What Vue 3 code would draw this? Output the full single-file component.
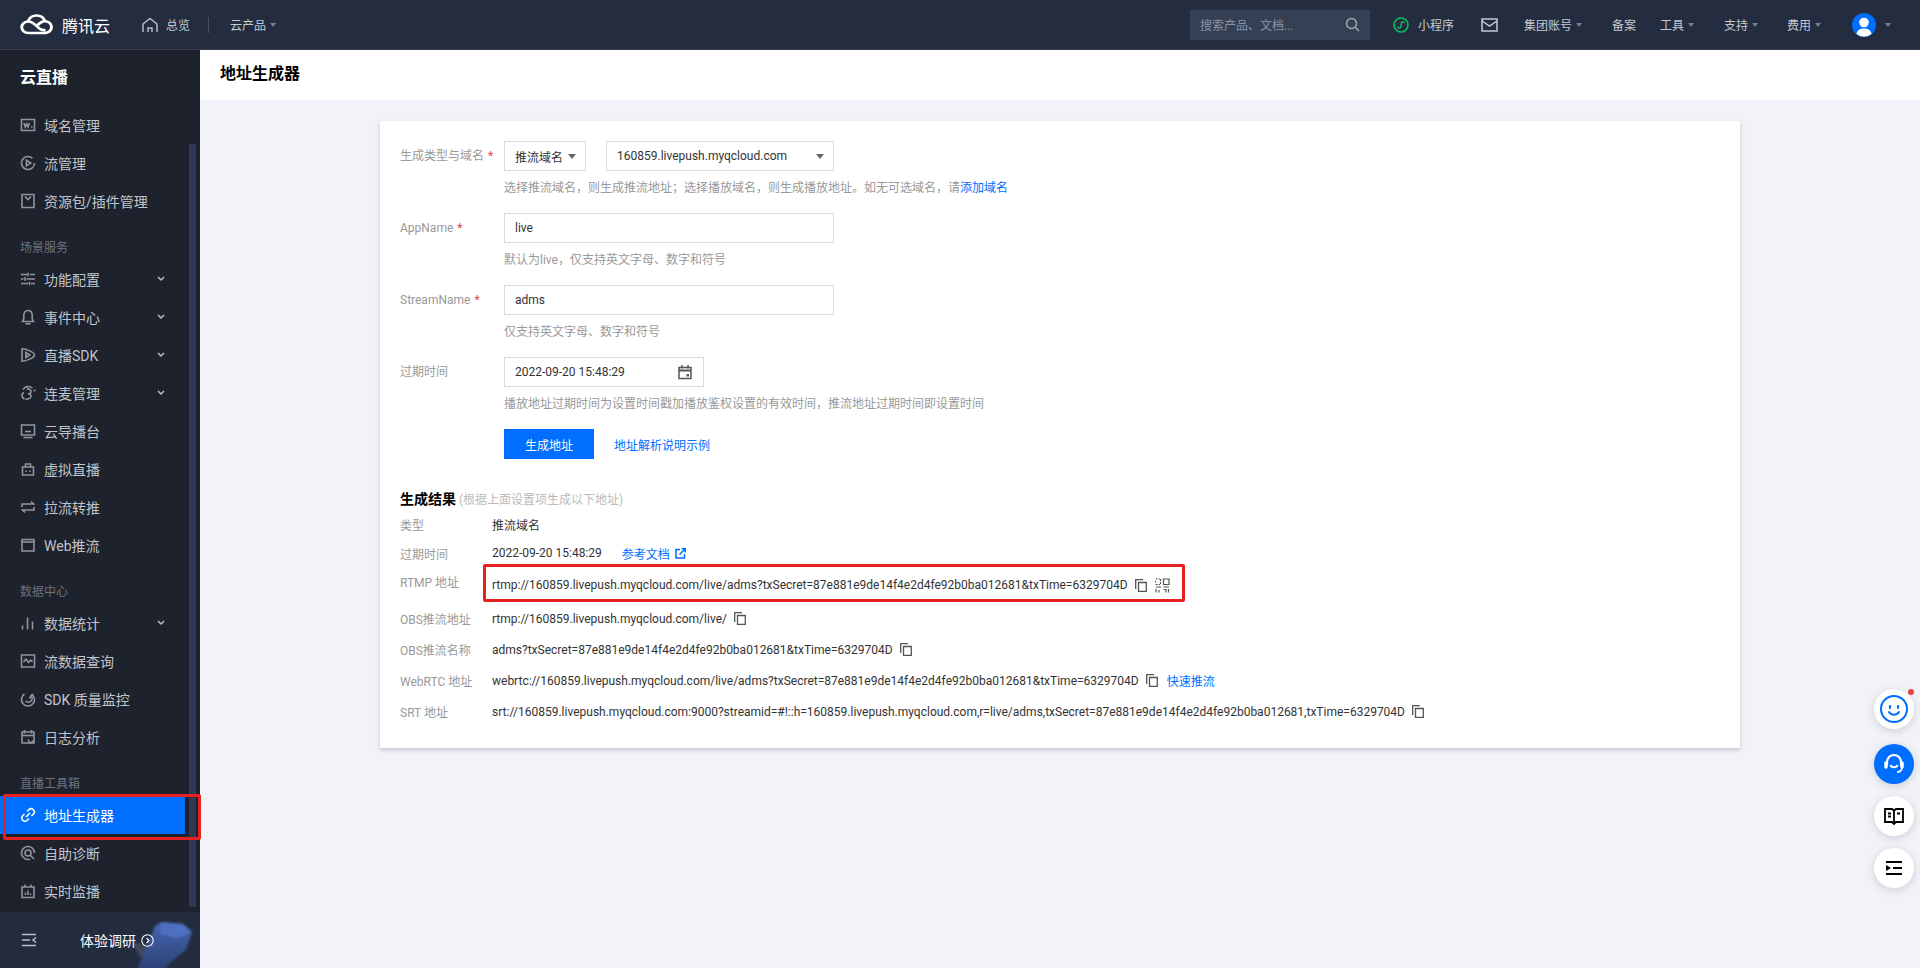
<script setup>
const navIcons = {
  domain: ['M1.500 2.500h13v11h-13z', 'M4 6l1.300 4 1.400-3 1.400 3 1.300-4', 'M11 10h1.500'],
  stream: ['M14.500 8A6.500 6.500 0 1 1 12.400 3.200', 'M6.400 5.200v5.600L10.800 8z'],
  pack: ['M2 1.500h12v13H2z', 'M5 3.500l3 3 3-3'],
  sliders: ['M1 3.500h6M10 3.500h5M8 1.800v3.400', 'M1 8h2.500M6.500 8H15M5 6.300v3.400', 'M1 12.500h7M11 12.500h4M9.500 10.800v3.400'],
  bell: ['M8 1.500C5.200 1.500 3.800 3.800 3.800 6.500v3.500L2.500 12.500h11L12.200 10V6.500c0-2.700-1.400-5-4.200-5z', 'M5.500 14.800h5'],
  sdk: ['M2 1.800c4 0 12.500 3.500 12.500 6.200S6 14.200 2 14.200z', 'M5.800 5.500v5l4-2.500z'],
  mic: ['M3 4.500A6.500 6.500 0 0 1 12.500 3', 'M7 4c2.500-.5 4.500 1 4 3s-3 1.800-3 1.800 3 .2 3 2.400-3 3.300-5.500 2.800', 'M4 7.500A3 3 0 0 0 2 10c0 2 1 3.500 2.500 4', 'M13.500 5.500h2'],
  director: ['M1.500 2h13v10h-13z', 'M5 8.500h6', 'M3.500 14.500h9'],
  robot: ['M2.500 6h11v8h-11z', 'M5.500 6V3h5v3', 'M6 9.500v1.500M10 9.500v1.500'],
  pull: ['M2 8V5h11.500L11 2.500', 'M14 8v3H2.500L5 13.500'],
  web: ['M2 2.500h12v11.500H2z', 'M2 5h12'],
  bars: ['M2.500 14.500v-4', 'M7.500 14.500V2.500', 'M12.500 14.500v-8'],
  query: ['M1.500 2h13v12h-13z', 'M3.500 9l2.500-3 2.500 3.500 2-2.500 2 1.500'],
  gauge: ['M4.500 3A6.500 6.500 0 1 0 11.500 3', 'M11 4.500A3.800 3.800 0 0 1 5.500 10', 'M9.500 7.500l2-3.500'],
  log: ['M2 3h12v11H2z', 'M4.500 1v3.500M11.500 1v3.500', 'M2 6.500h12', 'M9 10.500a2 2 0 1 0 3.500 1'],
  link: ['M6 10l4-4', 'M7 4.500L8.800 2.700a3.100 3.100 0 0 1 4.500 4.500L11.500 9', 'M9 11.500L7.200 13.300a3.100 3.100 0 0 1-4.500-4.500L4.500 7'],
  diag: ['M14.500 8A6.500 6.500 0 1 0 10 14.200', 'M5 8a3 3 0 1 1 6 0 3 3 0 0 1-6 0', 'M10.500 10.500l3.500 3.500'],
  monitor: ['M2 4h12v10.500H2z', 'M5 1.500V4M11 1.500V4', 'M5.500 12V9.500M8 12V7.500M10.500 12v-1.500']
}

const groups = [
  { items: [
    { name: '域名管理', icon: 'domain' },
    { name: '流管理', icon: 'stream' },
    { name: '资源包/插件管理', icon: 'pack' }
  ] },
  { label: '场景服务', items: [
    { name: '功能配置', icon: 'sliders', more: true },
    { name: '事件中心', icon: 'bell', more: true },
    { name: '直播SDK', icon: 'sdk', more: true },
    { name: '连麦管理', icon: 'mic', more: true },
    { name: '云导播台', icon: 'director' },
    { name: '虚拟直播', icon: 'robot' },
    { name: '拉流转推', icon: 'pull' },
    { name: 'Web推流', icon: 'web' }
  ] },
  { label: '数据中心', items: [
    { name: '数据统计', icon: 'bars', more: true },
    { name: '流数据查询', icon: 'query' },
    { name: 'SDK 质量监控', icon: 'gauge' },
    { name: '日志分析', icon: 'log' }
  ] },
  { label: '直播工具箱', items: [
    { name: '地址生成器', icon: 'link', active: true },
    { name: '自助诊断', icon: 'diag' },
    { name: '实时监播', icon: 'monitor' }
  ] }
]

const results = [
  { key: 'type', label: '类型', value: '推流域名' },
  { key: 'time', label: '过期时间', value: '2022-09-20 15:48:29', doc: true },
  { key: 'rtmp', label: 'RTMP 地址', value: 'rtmp://160859.livepush.myqcloud.com/live/adms?txSecret=87e881e9de14f4e2d4fe92b0ba012681&txTime=6329704D', copy: true, qr: true },
  { key: 'obs', label: 'OBS推流地址', value: 'rtmp://160859.livepush.myqcloud.com/live/', copy: true },
  { key: 'obsn', label: 'OBS推流名称', value: 'adms?txSecret=87e881e9de14f4e2d4fe92b0ba012681&txTime=6329704D', copy: true },
  { key: 'webrtc', label: 'WebRTC 地址', value: 'webrtc://160859.livepush.myqcloud.com/live/adms?txSecret=87e881e9de14f4e2d4fe92b0ba012681&txTime=6329704D', copy: true, quick: true },
  { key: 'srt', label: 'SRT 地址', value: 'srt://160859.livepush.myqcloud.com:9000?streamid=#!::h=160859.livepush.myqcloud.com,r=live/adms,txSecret=87e881e9de14f4e2d4fe92b0ba012681,txTime=6329704D', copy: true }
]
</script>

<template>
  <div class="page">
    <header class="topbar">
      <svg class="logo" width="33" height="21" viewBox="0 0 34 25" preserveAspectRatio="none" fill="none" stroke="#fff" stroke-width="3" stroke-linecap="round">
        <path d="M8.500 8.500C9.500 4.500 13 1.700 17 1.700c4 0 7.300 2.500 8.500 6.300" />
        <path d="M25.500 22.600H8.700a6.900 6.900 0 1 1 0-13.800c3 0 4.800 1.600 7.300 4.200l3.800 4c1.500 1.500 3.300 2.200 5.200 2.200" />
        <path d="M25.500 22.600a7 7 0 1 0 0-14c-2 0-3.600.8-5.200 2.400l-1.500 1.500" />
      </svg>
      <span class="brand">腾讯云</span>
      <svg class="home" width="18" height="16" viewBox="0 0 18 16" fill="none" stroke="#b4bac4" stroke-width="1.500"><path d="M2 15V7l7-5.500L16 7v8" /><path d="M7 15v-4h4v4" /></svg>
      <span class="tb-text tb-overview">总览</span>
      <span class="tb-divider"></span>
      <span class="tb-text">云产品</span><span class="caret"></span>
      <div class="tb-right">
        <div class="search">
          <span>搜索产品、文档...</span>
          <svg width="15" height="15" viewBox="0 0 15 15" fill="none" stroke="#a0a7b4" stroke-width="1.500"><circle cx="6.500" cy="6.500" r="5" /><path d="M10.300 10.300L14 14" /></svg>
        </div>
        <svg class="tb-mini" width="16" height="16" viewBox="0 0 16 16" fill="none"><circle cx="8" cy="8" r="7" stroke="#0abf5b" stroke-width="1.600" /><path d="M4.500 9.500c0 2 2.500 2.300 3.300.5l.6-4.200c.5-1.700 3-1.300 3 .5" stroke="#0abf5b" stroke-width="1.400" /></svg>
        <span class="tb-text tb-miniapp">小程序</span>
        <svg class="tb-mail" width="17" height="14" viewBox="0 0 17 14" fill="none" stroke="#c5cad2" stroke-width="1.500"><path d="M1 1h15v12H1z" /><path d="M1 3l7.500 5L16 3" /></svg>
        <span class="tb-text tb-group">集团账号</span><span class="caret"></span>
        <span class="tb-text tb-bei">备案</span>
        <span class="tb-text tb-tool">工具</span><span class="caret"></span>
        <span class="tb-text tb-sup">支持</span><span class="caret"></span>
        <span class="tb-text tb-fee">费用</span><span class="caret"></span>
        <svg class="tb-avatar" width="24" height="24" viewBox="0 0 24 24"><circle cx="12" cy="12" r="12" fill="#006eff" /><circle cx="12" cy="9.500" r="4.800" fill="#fff" /><path d="M4.500 21c.8-4 3.500-5.500 7.500-5.500s6.700 1.500 7.500 5.500a12 12 0 0 1-15 0z" fill="#fff" /></svg>
        <span class="caret caret-last"></span>
      </div>
    </header>

    <div class="body">
      <aside class="sidebar">
        <div class="side-title">云直播</div>
        <nav class="side-nav">
          <span class="side-thumb"></span>
          <div v-for="(g, i) in groups" :key="i">
            <div v-if="g.label" class="side-label">{{ g.label }}</div>
            <div v-for="it in g.items" :key="it.name" class="side-item" :class="{ active: it.active }">
              <svg width="16" height="16" viewBox="0 0 16 16" fill="none" stroke="currentColor" stroke-width="1.600">
                <path v-for="d in navIcons[it.icon]" :key="d" :d="d" />
              </svg>
              <span class="side-name">{{ it.name }}</span>
              <svg v-if="it.more" class="chev" width="8" height="6" viewBox="0 0 8 6" fill="none" stroke="#b8bdc6" stroke-width="1.500"><path d="M1 1l3 3 3-3" /></svg>
              <span v-if="it.active" class="annot annot-side"></span>
            </div>
          </div>
        </nav>
        <div class="side-foot">
          <svg class="foot-art" width="68" height="56" viewBox="0 0 68 56">
            <defs>
              <linearGradient id="artg" x1="0" y1="0" x2="0" y2="1">
                <stop offset="0" stop-color="#4766b4" />
                <stop offset="1" stop-color="#2a3f72" />
              </linearGradient>
            </defs>
            <path d="M0 26l14 3 9 9-15 3z" fill="#59606f" opacity=".55" />
            <path d="M23 10l6-4 22 2 9 8-6 18-15 12-9 10H4z" fill="url(#artg)" />
            <path d="M29 6l22 2 9 8-15 6-17-4z" fill="#4f70c2" />
          </svg>
          <svg class="foot-menu" width="16" height="14" viewBox="0 0 16 14" fill="none" stroke="#b8bdc6" stroke-width="1.500"><path d="M1 1.500h14M1 7h8M1 12.500h14M15 4.500L12 7l3 2.500" /></svg>
          <span class="foot-text">体验调研</span>
          <svg class="foot-arrow" width="13" height="13" viewBox="0 0 13 13" fill="none" stroke="#fff" stroke-width="1.100"><circle cx="6.500" cy="6.500" r="5.700" /><path d="M5.500 4l2.500 2.500L5.500 9" /></svg>
        </div>
      </aside>

      <main class="main">
        <div class="page-head">地址生成器</div>
        <div class="content">
          <section class="card">
            <div class="form-row">
              <label class="f-label">生成类型与域名<i>*</i></label>
              <div class="f-body">
                <div class="f-controls">
                  <div class="select s-type">推流域名<b></b></div>
                  <div class="select s-domain">160859.livepush.myqcloud.com<b></b></div>
                </div>
                <p class="hint">选择推流域名，则生成推流地址；选择播放域名，则生成播放地址。如无可选域名，请<a>添加域名</a></p>
              </div>
            </div>
            <div class="form-row">
              <label class="f-label">AppName<i>*</i></label>
              <div class="f-body">
                <div class="input">live</div>
                <p class="hint">默认为live，仅支持英文字母、数字和符号</p>
              </div>
            </div>
            <div class="form-row">
              <label class="f-label">StreamName<i>*</i></label>
              <div class="f-body">
                <div class="input">adms</div>
                <p class="hint">仅支持英文字母、数字和符号</p>
              </div>
            </div>
            <div class="form-row">
              <label class="f-label">过期时间</label>
              <div class="f-body">
                <div class="input date">2022-09-20 15:48:29
                  <svg width="16" height="16" viewBox="0 0 16 16" fill="none" stroke="#555" stroke-width="1.500"><path d="M2 3.500h12v11H2z" /><path d="M5 1v3.500M11 1v3.500" /><path d="M2 6.500h12" stroke-width="2" /><path d="M9.500 10h2.500v2.500H9.500z" fill="#555" stroke="none" /></svg>
                </div>
                <p class="hint">播放地址过期时间为设置时间戳加播放鉴权设置的有效时间，推流地址过期时间即设置时间</p>
              </div>
            </div>
            <div class="actions">
              <button class="primary">生成地址</button>
              <a class="act-link">地址解析说明示例</a>
            </div>

            <h3 class="res-title">生成结果<span>(根据上面设置项生成以下地址)</span></h3>
            <div v-for="r in results" :key="r.key" class="res-row" :class="'r-' + r.key">
              <span class="res-label">{{ r.label }}</span>
              <span class="res-value">{{ r.value }}</span>
              <a v-if="r.doc" class="doc">参考文档
                <svg width="11" height="11" viewBox="0 0 11 11" fill="none" stroke="#006eff" stroke-width="1.500"><path d="M5 1.500H1v8.500h8.500V6" /><path d="M4.500 6.500L10 1M6.500 .8H10.200V4.500" /></svg>
              </a>
              <svg v-if="r.copy" class="copy" width="12" height="13" viewBox="0 0 12 13" fill="none" stroke="#555" stroke-width="1.300"><path d="M.700 10V.700H8" /><path d="M3.500 3.500h7.800v8.800H3.500z" /></svg>
              <svg v-if="r.qr" class="qr" width="15" height="15" viewBox="0 0 15 15" fill="none" stroke="#555" stroke-width="1.200"><path d="M8.500 1h5.500v5.500H8.500z" /><path d="M.600 1h4.500M.600 3v1.500M.600 6.500h4.500M5.500 1v5" stroke-dasharray="2 1" /><path d="M1 9h5M1 11v3.500M4 12v2.500M8.500 9h5.500M8.500 11.500h2.500v3M13.500 11v3.500" /></svg>
              <a v-if="r.quick" class="quick">快速推流</a>
              <span v-if="r.qr" class="annot annot-rtmp"></span>
            </div>
          </section>
        </div>
      </main>
    </div>

    <div class="floats">
      <div class="fab">
        <svg width="30" height="30" viewBox="0 0 30 30" fill="none" stroke="#006eff"><circle cx="15" cy="15" r="13" stroke-width="2" /><path d="M11 12v2M19 12v2" stroke-width="2.200" stroke-linecap="round" /><path d="M10 18c2 3.500 8 3.500 10 0" stroke-width="2" stroke-linecap="round" /></svg>
        <span class="dot"></span>
      </div>
      <div class="fab fab-blue">
        <svg width="24" height="24" viewBox="0 0 24 24" fill="none" stroke="#fff" stroke-width="2.200"><path d="M5 13V10a7 7 0 0 1 14 0v3" /><path d="M4 11v4M20 11v4" stroke-width="3.500" stroke-linecap="round" /><path d="M8.500 13c1 3 6 3 7 0" /><path d="M20 16c-.5 3-3 4-5 4" stroke-width="1.600" /></svg>
      </div>
      <div class="fab">
        <svg width="20" height="20" viewBox="0 0 20 20" fill="none" stroke="#000" stroke-width="1.800"><path d="M1 3h7l2 1.500L12 3h7v13h-7l-2 2-2-2H1z" /><path d="M10 4.500V18" /><path d="M4 7.500h3M13 7.500h3M4 10.500h3" /></svg>
      </div>
      <div class="fab">
        <svg width="18" height="16" viewBox="0 0 18 16" fill="none" stroke="#000" stroke-width="2"><path d="M1 2h16M1 14h16M8 8h9" /><path d="M1 5l5 3-5 3z" fill="#000" stroke="none" /></svg>
      </div>
    </div>
  </div>
</template>

<style>
html, body { margin: 0; padding: 0; }
</style>

<style scoped>
.page {
  height: 968px;
  overflow: hidden;
  position: relative;
  display: flex;
  flex-direction: column;
  font-family: Roboto, "Noto Sans CJK SC", sans-serif;
  font-size: 12px;
  color: #444;
  background: #f2f3f8;
}
.topbar {
  height: 50px;
  flex: none;
  display: flex;
  align-items: center;
  padding-left: 20px;
  background: #242d3f;
  color: #c5cad2;
  box-sizing: border-box;
  border-bottom: 1px solid #3a3d45;
}
.brand { margin-left: 9px; font-size: 16px; color: #fff; width: 49px; white-space: nowrap; }
.home { margin-left: 30px; }
.tb-text { font-size: 12px; white-space: nowrap; }
.tb-overview { margin-left: 7px; }
.tb-divider { width: 1px; height: 16px; background: #465063; margin: 0 21px 0 18px; }
.caret { width: 0; height: 0; margin-left: 4px; border: 3px solid transparent; border-top: 4px solid #778090; border-bottom: 0; }
.tb-right { margin-left: auto; display: flex; align-items: center; }
.search {
  width: 180px; height: 30px; box-sizing: border-box; padding: 0 10px;
  display: flex; align-items: center; justify-content: space-between;
  background: #364055; color: #8a93a3;
}
.tb-mini { margin-left: 23px; }
.tb-miniapp { margin-left: 9px; }
.tb-mail { margin-left: 27px; }
.tb-group { margin-left: 26px; }
.tb-bei { margin-left: 30px; }
.tb-tool { margin-left: 24px; }
.tb-sup { margin-left: 30px; }
.tb-fee { margin-left: 29px; }
.tb-avatar { margin-left: 31px; }
.caret-last { margin-left: 9px; margin-right: 29px; }

.body { flex: 1; display: flex; min-height: 0; }
.sidebar {
  width: 200px; flex: none; display: flex; flex-direction: column;
  background: #1e222d; color: #c1c5cb;
}
.side-title { height: 56px; box-sizing: border-box; padding: 17px 20px 0; font-size: 16px; line-height: 22px; font-weight: 700; color: #fff; flex: none; }
.side-nav { flex: 1; position: relative; min-height: 0; }
.side-thumb { position: absolute; left: 189px; top: 38px; bottom: 5px; width: 7px; background: #2e3a52; }
.side-label { height: 40px; box-sizing: border-box; padding: 20px 20px 0; line-height: 16px; color: #6d727c; }
.side-item {
  height: 38px; display: flex; align-items: center; padding: 0 20px; position: relative;
  font-size: 14px; width: 185px; box-sizing: border-box;
}
.side-name { margin-left: 8px; white-space: nowrap; font-size: 14px; }
.side-item svg { flex: none; color: #8f949e; }
.side-item .chev { position: absolute; left: 157px; top: 16px; }
.side-item.active { background: #006eff; color: #fff; }
.side-item.active svg { color: #fff; }
.annot { position: absolute; border: 3px solid #e6211f; box-sizing: border-box; pointer-events: none; border-radius: 2px; }
.annot-side { left: 3px; top: -2px; width: 198px; height: 46px; }
.side-foot {
  height: 56px; flex: none; position: relative; overflow: hidden;
  display: flex; align-items: center; background: #232c3f;
}
.foot-art { position: absolute; left: 132px; top: 4px; filter: blur(.8px); }
.foot-menu { margin-left: 21px; position: relative; }
.foot-text { margin-left: 43px; font-size: 14px; color: #fff; position: relative; white-space: nowrap; }
.foot-arrow { margin-left: 5px; position: relative; }

.main { flex: 1; display: flex; flex-direction: column; min-width: 0; }
.page-head {
  height: 50px; flex: none; box-sizing: border-box; padding: 0 20px; background: #fff;
  font-size: 16px; font-weight: 600; line-height: 48px; color: #000;
}
.content { flex: 1; padding: 21px 180px 0; }
.card {
  background: #fff; padding: 20px; box-sizing: border-box; height: 627px;
  box-shadow: 0 2px 4px rgba(54, 58, 80, .25);
}
.form-row { display: flex; height: 72px; }
.f-label { width: 104px; flex: none; line-height: 30px; color: #999; white-space: nowrap; }
.f-label i { color: #e54545; font-style: normal; margin-left: 4px; }
.f-body { flex: 1; min-width: 0; }
.f-controls { display: flex; gap: 20px; }
.select, .input {
  height: 30px; box-sizing: border-box; border: 1px solid #ddd; color: #333;
  display: flex; align-items: center; padding: 0 10px; position: relative; background: #fff;
}
.select b { position: absolute; right: 9px; top: 12px; width: 0; height: 0; border: 4px solid transparent; border-top: 5px solid #666; border-bottom: 0; }
.s-type { width: 82px; }
.s-domain { width: 228px; }
.input { width: 330px; }
.date { width: 200px; justify-content: space-between; }
.hint { margin: 8px 0 0; line-height: 18px; color: #999; white-space: nowrap; }
a { color: #006eff; }
.actions { display: flex; align-items: center; padding-left: 104px; }
.primary {
  width: 90px; height: 30px; border: 0; background: #006eff; color: #fff;
  font: inherit; padding: 0;
}
.act-link { margin-left: 20px; }
.res-title { margin: 30px 0 0; font-size: 14px; line-height: 20px; height: 20px; color: #000; font-weight: 700; }
.res-title span { font-size: 12px; font-weight: 400; color: #bbb; margin-left: 3px; }
.res-row { height: 31px; display: flex; align-items: center; position: relative; white-space: nowrap; }
.r-type { height: 30px; }
.r-time { height: 28px; }
.r-rtmp { height: 36px; }
.res-label { width: 92px; flex: none; color: #999; }
.r-rtmp .res-label { padding-bottom: 8px; }
.res-value { color: #333; }
.doc { margin-left: 20px; display: inline-flex; align-items: center; gap: 5px; }
.copy { margin-left: 7px; }
.qr { margin-left: 8px; }
.quick { margin-left: 9px; }
.annot-rtmp { left: 83px; top: -3px; width: 702px; height: 38px; }

.floats { position: absolute; right: 6px; top: 689px; display: flex; flex-direction: column; gap: 12px; }
.fab {
  width: 40px; height: 40px; border-radius: 50%; background: #fff; position: relative;
  display: flex; align-items: center; justify-content: center;
  box-shadow: 0 2px 8px rgba(54, 58, 80, .2);
}
.fab-blue { background: #006eff; margin-top: 3px; }
.dot { position: absolute; right: 0; top: 0; width: 6px; height: 6px; border-radius: 50%; background: #e54545; }
</style>
